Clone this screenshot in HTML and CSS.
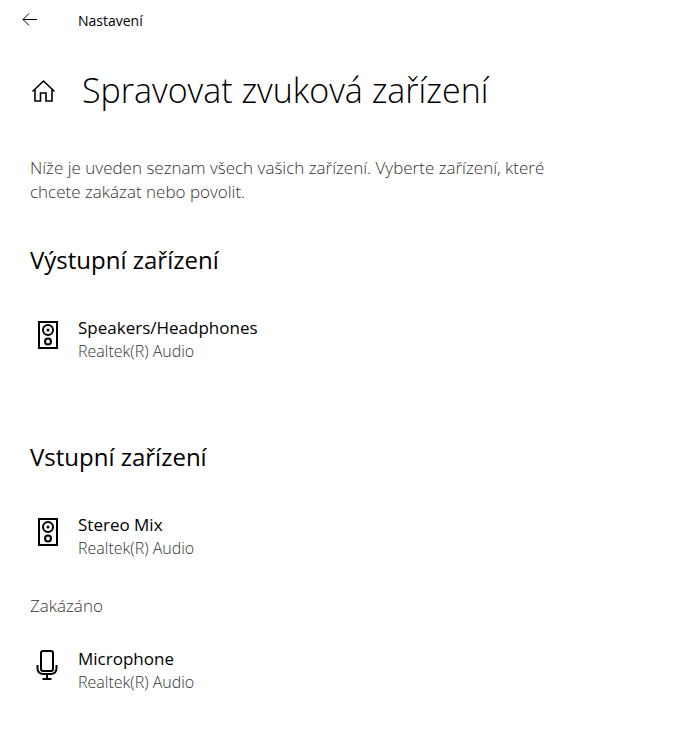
FILE: index.html
```
<!DOCTYPE html>
<html lang="cs">
<head>
    <meta charset="UTF-8">
    <meta name="viewport" content="width=device-width, initial-scale=1.0">
    <title>Nastavení</title>
    <link rel="stylesheet" href="styles.css">
</head>
<body>
    <header class="titlebar">
        <button class="back" type="button" aria-label="Zpět">
            <svg width="16" height="14" viewBox="0 0 16 14"><path d="M15 6.500H1M7 .5L1 6.500l6 6"/></svg>
        </button>
        <span class="app-name">Nastavení</span>
    </header>

    <main class="page">
        <div class="heading">
            <button class="home" type="button" aria-label="Domů">
                <svg width="26" height="24" viewBox="0 0 26 24"><path d="M2.500 13.500L13.500 3l11 10.500M5 11.500V23h5.500v-8h5.500v8h6V11.500"/></svg>
            </button>
            <h1>Spravovat zvuková zařízení</h1>
        </div>
        <p class="intro">Níže je uveden seznam všech vašich zařízení. Vyberte zařízení, které chcete zakázat nebo povolit.</p>

        <!-- Output devices -->
        <section class="group">
            <h2>Výstupní zařízení</h2>
            <button class="device" type="button">
                <svg width="36" height="36" viewBox="0 0 36 36"><path d="M9 6h18v26H9z"/><circle cx="18" cy="14" r="5"/><circle cx="18" cy="25.500" r="3"/><circle class="dot" cx="18" cy="14" r="1.500"/></svg>
                <span class="device-text">
                    <span class="device-name">Speakers/Headphones</span>
                    <span class="device-driver">Realtek(R) Audio</span>
                </span>
            </button>
        </section>

        <!-- Input devices -->
        <section class="group">
            <h2>Vstupní zařízení</h2>
            <button class="device" type="button">
                <svg width="36" height="36" viewBox="0 0 36 36"><path d="M9 6h18v26H9z"/><circle cx="18" cy="14" r="5"/><circle cx="18" cy="25.500" r="3"/><circle class="dot" cx="18" cy="14" r="1.500"/></svg>
                <span class="device-text">
                    <span class="device-name">Stereo Mix</span>
                    <span class="device-driver">Realtek(R) Audio</span>
                </span>
            </button>
            <h3>Zakázáno</h3>
            <button class="device" type="button">
                <svg width="36" height="36" viewBox="0 0 36 36"><rect x="11" y="4" width="12" height="20" rx="2"/><path d="M7.500 18v3q0 6 6 6h7q6 0 6-6v-3M17 27v5M12.500 32h9"/></svg>
                <span class="device-text">
                    <span class="device-name">Microphone</span>
                    <span class="device-driver">Realtek(R) Audio</span>
                </span>
            </button>
        </section>
    </main>
</body>
</html>
```

FILE: styles.css
```
* {
    box-sizing: border-box;
}
body {
    margin: 0;
    background: #fff;
    color: #000;
    font-family: "Segoe UI", "Open Sans", sans-serif;
}
button {
    border: none;
    background: none;
    padding: 0;
    font: inherit;
    color: inherit;
    text-align: left;
    cursor: pointer;
}
svg {
    display: block;
    fill: none;
    stroke: #000;
    stroke-width: 2;
}
.titlebar {
    display: flex;
    align-items: center;
    height: 40px;
    padding-left: 22px;
    gap: 40px;
}
.back svg {
    stroke-width: 1;
}
.app-name {
    font-size: 14px;
}
.page {
    padding: 20px 30px;
}
.heading {
    display: flex;
    align-items: center;
    gap: 26px;
    height: 60px;
}
.home svg {
    stroke-width: 1.6;
}
h1 {
    margin: 0;
    font-size: 34px;
    font-weight: 300;
    line-height: 40px;
}
h2 {
    margin: 0 0 40px;
    font-size: 24px;
    font-weight: 400;
    line-height: 32px;
}
h3 {
    margin: 0 0 29px;
    font-size: 17px;
    font-weight: 300;
    line-height: 24px;
    color: #333;
}
.intro {
    max-width: 540px;
    margin: 36px 0 40px;
    font-size: 17px;
    font-weight: 300;
    line-height: 24px;
    color: #333;
}
.group + .group {
    margin-top: 79px;
}
.device {
    display: flex;
    align-items: flex-start;
    width: 100%;
    gap: 12px;
}
.device + h3 {
    margin-top: 35px;
}
.device-text {
    display: flex;
    flex-direction: column;
}
.device-name {
    font-size: 17px;
    line-height: 24px;
}
.device-driver {
    font-size: 16px;
    font-weight: 300;
    line-height: 22px;
    color: #333;
}
.dot {
    fill: #000;
    stroke: none;
}
```
